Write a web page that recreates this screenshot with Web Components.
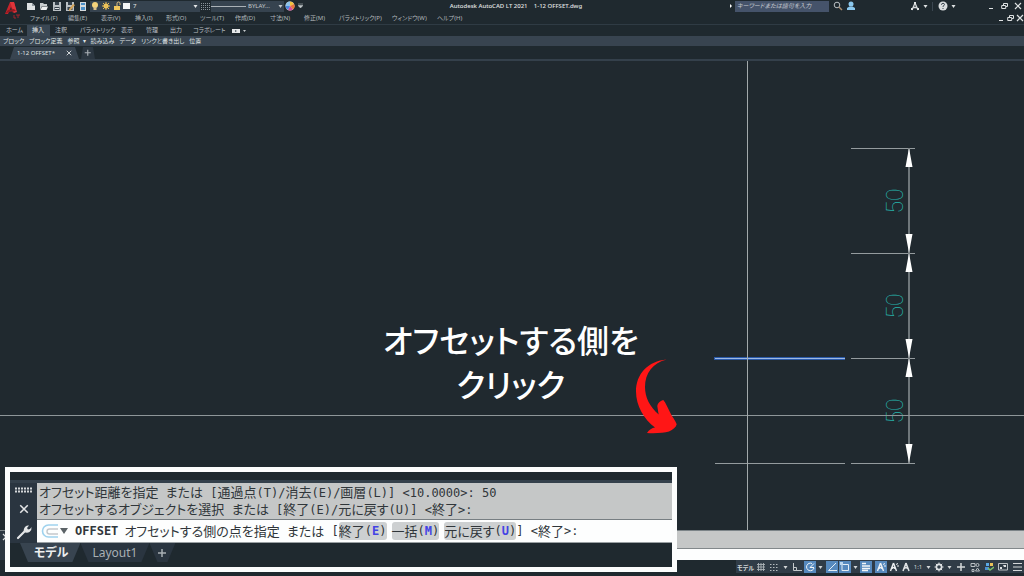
<!DOCTYPE html>
<html lang="ja">
<head>
<meta charset="utf-8">
<title>Autodesk AutoCAD LT 2021 - 1-12 OFFSET.dwg</title>
<style>
html,body{height:100%;margin:0}
body{background:#1f292f;font-family:"Noto Sans","Noto Sans CJK JP",sans-serif;color:#c3c8cb}
</style>
</head>
<body>
<cad-app></cad-app>
<script>
const base = `*{box-sizing:border-box}
button,select,input{font:inherit;color:inherit;font-feature-settings:inherit;background:none;border:0;padding:0;margin:0;min-width:0;appearance:none;outline:0}
button{display:flex;align-items:center;justify-content:center;white-space:nowrap}
a{color:inherit;text-decoration:none;white-space:nowrap}`;

function define(name, css, html) {
  customElements.define(name, class extends HTMLElement {
    constructor() {
      super();
      this.attachShadow({mode: 'open'}).innerHTML =
        `<style>${base}${css}</style>${typeof html === 'function' ? html(this) : html}`;
    }
  });
}

const icons = {
  logo: [16,18,'<path d="M1 12 6 0h4l2 8-3 3-2-6-3 7z" fill="#c5242b"/><path d="m6 0 4 0 3 10-3 1z" fill="#e0353a"/><path d="M1 12 4 8l6-1 2 2-7 1z" fill="#931a21"/><path d="M10 13v3h2M12 13h4M14 13v3" stroke="#a3242b" fill="none"/>'],
  fresh: [10,9,'<path d="M1 1h5l3 3v4H1z" fill="#dfe2e3"/><path d="m6 1 3 3H6z" fill="#8f989d"/>'],
  open: [10,9,'<path d="M1 8V1h3l1 1h3v2H3z" fill="#c9cdcf"/><path d="m3 4.500h6L7.500 8H1.500z" fill="#f0f1f1"/>'],
  save: [10,9,'<path d="M1 0h8v9H1z" fill="#b9bfc3"/><path d="M3 0h4v3H3zM2.500 5h5v3h-5z" fill="#35414b"/><path d="M3 6h4v1H3z" fill="#dfe2e3"/>'],
  saveas: [10,9,'<path d="M1 0h8v9H1z" fill="#b9bfc3"/><path d="M3 0h4v3H3zM2.500 5h5v3h-5z" fill="#35414b"/><path d="m4 7 4-5 2 1-4 5-2 1z" fill="#d3a45b"/>'],
  plot: [10,9,'<path d="M2 0h6v9H2z" fill="#d5dadd"/><path d="M3 1h4v2H3zM3 5h4v3H3z" fill="#4b8fc7"/>'],
  bulb: [8,10,'<circle cx="4" cy="4" r="3" fill="#f4d27a"/><path d="M2.500 6h3v3h-3z" fill="#d9c08a"/>'],
  sun: [10,10,'<circle cx="5" cy="5" r="2.500" fill="#f6cf68"/><path d="M5 1v8M1 5h8M2 2l6 6M8 2 2 8" stroke="#e8bd52"/>'],
  lock: [8,10,'<path d="M1 5h6v4H1z" fill="#f0c75c"/><path d="M4 5V2.500a1.500 1.500 0 0 1 3 0V4" fill="none" stroke="#e3c683"/>'],
  swatch: [8,8,'<path d="M0 1h7v6H0z" fill="#f5f6f6"/>'],
  hatch: [9,7,'<path d="M0 .5h9M0 2.500h9M0 4.500h9M0 6.500h9" stroke="#89939a" stroke-dasharray="1 1"/>'],
  wheel: [10,10,'<circle cx="5" cy="5" r="4.500" fill="#e8e3d5"/><path d="M5 5V.5A4.500 4.500 0 0 1 9 3z" fill="#f3c23c"/><path d="M5 5 9 3a4.500 4.500 0 0 1-1 5.500z" fill="#e8743b"/><path d="m5 5 3 3.500a4.500 4.500 0 0 1-5 .5z" fill="#d34a9a"/><path d="M5 5 3 9a4.500 4.500 0 0 1-2.500-4z" fill="#4a86e0"/><path d="M5 5H.5A4.500 4.500 0 0 1 5 .5z" fill="#8fc3e8"/>'],
  caret: [5,5,'<path d="M.5 1h4L2.500 4z" fill="currentColor"/>'],
  dropbar: [5,6,'<path d="M0 1h5M0 2.500h5L2.500 5z" fill="currentColor" stroke="currentColor" stroke-width=".5"/>'],
  play: [4,6,'<path d="M1 1v4l2-2z" fill="#fff"/>'],
  search: [10,10,'<circle cx="4" cy="4" r="2.800" fill="none" stroke="#b9bfc3"/><path d="m6 6 3 3" stroke="#a88c70" stroke-width="1.500"/>'],
  user: [10,10,'<circle cx="5" cy="3" r="2.500" fill="#8bc8ee"/><path d="M1 9V7l2.500-1.500h3L9 7v2z" fill="#8bc8ee"/>'],
  apps: [10,9,'<path d="m5 1 3 7M5 1 2 8M3 5.500h4" stroke="#d5d8da" stroke-width="1.300" fill="none"/><path d="M4 0h2v2H4zM1 6h2v2H1zM7 6h2v2H7z" fill="#e1e3e4"/>'],
  help: [10,10,'<circle cx="5" cy="5" r="4.500" fill="#dadddf"/><path d="M3.500 3.800q0-1.500 1.500-1.500t1.500 1.300q0 .7-1.500 1.700v.7M5 7v1" stroke="#38434c" fill="none"/>'],
  min: [8,8,'<path d="M1 6.500h4" stroke="currentColor"/>'],
  restore: [8,8,'<path d="M2.500 3V1.500h4v3H5M.7 3.500h4v3h-4z" stroke="currentColor" fill="none"/>'],
  close: [8,8,'<path d="m1 1 6 6M7 1 1 7" stroke="currentColor" stroke-width="1.200"/>'],
  plus: [10,10,'<path d="M5 1v8M1 5h8" stroke="currentColor" stroke-width="1.500"/>'],
  media: [14,6,'<path d="M0 1h8v4H0z" fill="#e5e7e8"/><path d="M3 2v2l2-1z" fill="#46525c"/><path d="M11 2h3l-1.500 2z" fill="#c3c8cb"/>'],
  grip: [19,6,'<path d="M1 1.500h18M1 4.500h18" stroke="#d4d7d9" stroke-width="2" stroke-dasharray="2 1"/>'],
  wrench: [16,16,'<path d="m2 14 7-7" stroke="#e4e6e7" stroke-width="2.200" stroke-linecap="round"/><path d="M8 8q-1-3 1.500-5.500Q11 1 13 1.500L11 4l1 1.500 2-.5 1.500-2Q16 6 13.500 8 11 9.500 8 8z" fill="#e4e6e7"/>'],
  offset: [18,14,'<path d="M17 1H7.500a6 6 0 0 0 0 12H17" fill="none" stroke="#9ed2ee" stroke-width="1.600"/><path d="M17 5H8.500a2.500 2.500 0 0 0 0 5H17" fill="none" stroke="#c3c8cc" stroke-width="1.400"/>'],
  grid: [10,10,'<path d="M2.500 1v8M5 1v8M7.500 1v8M1 2.500h8M1 5h8M1 7.500h8" stroke="#a9b1b6" stroke-width=".9"/>'],
  snap: [10,10,'<path d="M1 2.500h8M1 5.500h8M1 8.500h8" stroke="#b4bbbf" stroke-dasharray="1.500 1.500"/>'],
  ortho: [10,10,'<path d="M1.500 1v7.500H10M1.500 5.500h3v3" fill="none" stroke="#c3c8cb"/>'],
  polar: [10,10,'<path d="M7 1.500A3.800 3.800 0 1 0 9 6M9 5.500H5l4-4" fill="none" stroke="#f1f4f6"/>'],
  angle: [10,10,'<path d="M9 1 1.500 8.500H10" fill="none" stroke="#e4edf4"/>'],
  osnap: [10,10,'<path d="M2 2.500h6.500v6H2z" fill="none" stroke="#e4edf4"/><path d="M0 0h3v3H0z" fill="#b9d6ee"/>'],
  weight: [10,10,'<path d="M1 1.500h4M1 4h8M1 6.500h8M1 8.500h6" stroke="#f3f6f8" stroke-width="1.300"/>'],
  ann: [10,10,'<path d="M4.500 1 1.500 9M4.500 1l3 8M3 6.500q1.500-2 3 0" fill="none" stroke="#eef1f3" stroke-width="1.400"/><path d="m7 2.500 2-1M8 4h2" stroke="#eef1f3"/>'],
  person: [10,10,'<path d="M5 1 2 9M5 1l3 8M3.500 6.500q1.500-2 3 0" fill="none" stroke="#dde0e2" stroke-width="1.500"/>'],
  gear: [10,10,'<circle cx="5" cy="5" r="2.600" fill="none" stroke="#dde0e2" stroke-width="1.600"/><path d="M5 .5v2M5 7.500v2M.5 5h2M7.500 5h2M1.800 1.800l1.500 1.500M6.700 6.700l1.500 1.500M8.200 1.800 6.700 3.300M3.300 6.700 1.800 8.200" stroke="#dde0e2"/>'],
  shapes: [10,10,'<path d="M1 1.500h4v3H1zM2 7.500h2v2H2z" fill="none" stroke="#b9bfc3"/><circle cx="7.500" cy="3" r="1.500" fill="none" stroke="#b9bfc3"/><path d="m7.500 6 2 3h-4z" fill="none" stroke="#b9bfc3"/>'],
  perf: [10,10,'<path d="M2 1h3v3H2z" fill="#5aa9e6"/><path d="M6 1h3v3H6z" fill="#e9c35a"/><path d="M1 5h4v3H1z" fill="#4b8fd7"/><path d="m4 6 2 2 4-3" fill="none" stroke="#79c06b" stroke-width="1.500"/>'],
  clean: [10,10,'<path d="M.5 1.500h9v6.500h-9z" fill="none" stroke="#b9bfc3"/><path d="M5 3h3v2H6zM2 5h2v2H2z" fill="#dde0e2"/>'],
  menu: [10,10,'<path d="M1 1.500h9M1 5h9M1 8.500h9" stroke="#d3d7d9" stroke-width="1.200"/>']
};

define('cad-icon', ':host{display:block;flex:none;line-height:0}svg{display:block}', el => {
  const [w, h, body] = icons[el.getAttribute('name')];
  return `<svg width="${w}" height="${h}" viewBox="0 0 ${w} ${h}" aria-hidden="true">${body}</svg>`;
});
const icon = n => `<cad-icon name="${n}"></cad-icon>`;
const ib = (n, label, cls = '') => `<button class="${cls}" aria-label="${label}">${icon(n)}</button>`;

define('cad-titlebar', `
:host{display:grid;grid-template-columns:1fr auto 1fr;align-items:center;height:12px;padding-left:8px;font-size:6px;line-height:12px}
.left{display:flex;align-items:center;padding-left:16px}
.left>button{width:13px}
.left>.n{width:11px}
.layer{display:flex;align-items:center;gap:2px;width:110px;height:11px;margin-left:1px;padding:0 2px 0 1px;background:#36434f;color:#e5e7e8}
.layer select{flex:1}
.line{display:flex;align-items:center;width:73px;height:11px;padding-right:1px;background:#36434f;gap:2px}
.line i{width:35px;height:1px;background:#aab1b6}
.line select{flex:1}
h1{margin:0;font-size:6px;font-weight:500;color:#e1e4e5;white-space:pre}
.right{display:flex;align-items:center;justify-content:flex-end;color:#dfe2e3}
input{width:94px;height:11px;margin:0 2px 0 2px;padding:0 2px;background:#45536a;font-style:italic;font-feature-settings:"palt"}
input::placeholder{color:#c5cad0;opacity:1}
.right button{width:13px}
.right .apps{margin-left:51px}
.right .c{width:8px}
.bar{width:1px;height:9px;background:#3b4650;margin:0 3px}
.right .w{margin-left:28px}`,
`<div class="left">${ib('fresh','新規')}${ib('open','開く')}${ib('save','保存')}${ib('saveas','名前を付けて保存')}${ib('plot','印刷')}
<div class="layer">${icon('bulb')}${icon('sun')}${icon('lock')}${icon('swatch')}<select aria-label="画層"><option>7</option></select>${icon('caret')}</div>
${ib('hatch','線種','n')}
<div class="line"><i></i><select aria-label="線の太さ"><option>BYLAY...</option></select>${icon('caret')}</div>
${ib('wheel','色','n')}${ib('dropbar','クイックアクセス','n')}</div>
<h1>Autodesk AutoCAD LT 2021    1-12 OFFSET.dwg</h1>
<div class="right">${icon('play')}<input type="search" aria-label="検索" placeholder="キーワードまたは語句を入力">${ib('search','検索する')}${ib('user','サインイン')}${ib('apps','アプリ','apps')}${ib('caret','アプリのメニュー','c')}<span class="bar"></span>${ib('help','ヘルプ')}${ib('caret','ヘルプのメニュー','c')}${ib('min','最小化','w')}${ib('restore','元のサイズ')}${ib('close','閉じる')}</div>`);

define('cad-menubar', `
:host{display:flex;justify-content:space-between;height:12px;padding-left:30px;font-size:6px;line-height:12px;font-feature-settings:"palt";color:#b1b8bc}
nav{display:grid;grid-template-columns:38px 33px 34px 31px 34px 35px 35px 34px 35px 53px 45px auto}
div{display:flex;color:#dfe2e3}
button{width:9px}`,
`<nav>${['ファイル(F)','編集(E)','表示(V)','挿入(I)','形式(O)','ツール(T)','作成(D)','寸法(N)','修正(M)','パラメトリック(P)','ウィンドウ(W)','ヘルプ(H)'].map(t => `<a href="#">${t}</a>`).join('')}</nav>
<div>${ib('min','図面を最小化')}${ib('restore','図面を元のサイズに')}${ib('close','図面を閉じる')}</div>`);

define('cad-ribbon', `
:host{display:block;border-top:1px solid #2f3b44;font-size:6px;line-height:10px;font-feature-settings:"palt";color:#b9bfc3}
nav{display:grid;grid-template-columns:26px 23px 25px 41px 25px 24px 23px 44px auto;justify-content:start;height:11px;padding-left:1px}
nav a{padding-left:5px}
nav a.on{background:#3a4754;color:#e5e7e8}
.panels{display:flex;gap:5px;height:10px;padding-left:3px;background:#384450;color:#dfe2e3}`,
`<nav>${['ホーム','挿入','注釈','パラメトリック','表示','管理','出力','コラボレート'].map(t => `<a href="#"${t === '挿入' ? ' class="on"' : ''}>${t}</a>`).join('')}${ib('media','表示切り替え')}</nav>
<div class="panels">${['ブロック','ブロック定義','参照 &nbsp;▾','読み込み','データ','リンクと書き出し','位置'].map(t => `<button>${t}</button>`).join('')}</div>`);

define('cad-filetabs', `
:host{display:flex;align-items:flex-end;gap:2px;height:15px;padding-left:10px;border-bottom:2px solid #34404b;font-size:6px;line-height:12px}
div{display:flex;align-items:center;gap:11px;height:12px;padding:0 7px;background:#384450;clip-path:polygon(0 100%,4px 0,calc(100% - 4px) 0,100% 100%);color:#dfe2e3}
.add{width:14px;height:12px;background:#2c3741;clip-path:polygon(0 100%,2px 0,12px 0,100% 100%);color:#aab1b6}
div cad-icon,.add cad-icon{zoom:.75}`,
`<div><a href="#">1-12 OFFSET*</a>${ib('close','タブを閉じる')}</div>${ib('plus','新しい図面','add')}`);

const dim = y => `<path d="M909 ${y}v105" stroke="#6f777b" stroke-width="2"/><path d="m909 ${y} 3.500 19h-7zM909 ${y + 105}l3.500-19h-7z" fill="#fff"/><text transform="translate(903 ${y + 53}) rotate(-90)">50</text>`;
define('cad-canvas', `
:host{display:block;position:relative;min-height:0;overflow:hidden;background:#20292f}
svg{position:absolute;inset:0;width:100%;height:100%}
text{font:100 23px Roboto,sans-serif;fill:#27b5ac;text-anchor:middle}
p{position:absolute;left:383px;top:256px;margin:0;color:#fff;font:500 32px/44px "Noto Sans CJK JP",sans-serif;font-feature-settings:"palt";text-align:center;white-space:nowrap}`,
`<svg><g transform="translate(0 -61)">
<path d="M851 148.500h64M851 253.500h64M851 358.500h64M851 463.500h64M715 463.500h130" stroke="#949b9e"/>
${dim(148)}${dim(253)}${dim(358)}
<path d="M714 358.500h131" stroke="#2a59a8" stroke-width="3"/><path d="M715 358.500h130" stroke="#9db8e2"/>
</g>
<line x1="0" y1="354.500" x2="100%" y2="354.500" stroke="#8e9699"/><line x1="747.500" y1="0" x2="747.500" y2="100%" stroke="#a2a9ab"/>
<path transform="translate(0 -61)" fill="#ff1616" d="M666.700 359.500C648 361 636 374 636 391.500c0 14 8 28 19 36-3 .5-6 2-8 5.500 8 .5 17 0 22-1.500 4-2 7-4 7.700-7.200-1-3.500-5-8-7.200-13-2-4-3.500-8-6.200-11.300-4 1.500-6.500 4-5.800 7.500.5 3 .8 5 1.200 7-9-8-13.700-17-13.700-27.500 0-14 8-24 21.700-27.500z"/>
</svg><p>オフセットする側を<br>クリック</p>`);

define('cad-commandbar', `
:host{display:grid;grid-template-columns:10px 1fr;height:30px;background:#2c3741;border-top:1px solid #7c8488;color:#dfe2e3}
.hist{height:18px;background:#c5c7c7;border-bottom:1px solid #82888b}
input{display:block;width:100%;height:11px;background:#fdfefe}
.side{padding:2px}`,
`<div class="side">${icon('close')}</div><div><div class="hist"></div><input aria-label="コマンド"></div>`);

define('cad-statusbar', `
:host{display:flex;justify-content:flex-end;align-items:flex-start;height:16px;font-size:6px;font-feature-settings:"palt";color:#d3d7d9}
div{display:flex;height:13px;padding-top:1px;background:#303c47}
button{height:12px;width:14px}
.s{width:12px}.c{width:9px}.l{width:19px;font-weight:600}
.on{width:12px;background:#5689bd}
.g{margin-left:1px}.h{margin-left:3px}`,
`<div><button class="l">モデル</button>${ib('grid','グリッド','s')}${ib('snap','スナップ')}${ib('caret','スナップ設定','c')}${ib('ortho','直交モード')}${ib('polar','極トラッキング','on')}${ib('caret','極トラッキング設定','c')}${ib('angle','オブジェクトスナップトラッキング','on g')}${ib('osnap','オブジェクトスナップ','on g')}${ib('caret','スナップの種類','c')}${ib('weight','線の太さ','on')}${ib('ann','注釈オブジェクト','on h')}${ib('ann','自動尺度','s g')}${ib('person','注釈尺度','s')}<button class="s">1:1</button>${ib('caret','尺度一覧','c')}${ib('gear','ワークスペース','s')}${ib('caret','ワークスペース一覧','c')}${ib('plus','注釈モニター')}${ib('shapes','選択表示')}${ib('perf','パフォーマンス')}${ib('clean','全画面表示')}${ib('menu','カスタマイズ')}</div>`);

define('cad-zoombox', `
:host{display:grid;grid-template-rows:11px auto 23px 1fr;grid-template-columns:27px 1fr;width:672px;height:105px;border:5px solid #fcfdfd;background:#1f292f;font:13px/16px "Noto Sans CJK JP",sans-serif;font-feature-settings:"palt";color:#30363a;overflow:hidden}
.top{grid-column:1/-1;border-bottom:3px solid #34404b}
.side{grid-row:2/4;display:flex;flex-direction:column;align-items:center;justify-content:space-between;padding:4px 0 3px;background:#2a3540;color:#e4e6e7}
.side button:nth-of-type(1) cad-icon{zoom:1.25}
.hist{height:37px;padding:1px 2px;background:#c5c7c7;border-bottom:1px solid #777e82}
.hist div{white-space:pre}
tt{font:12px/16px "DejaVu Sans Mono",monospace;white-space:pre}
.cmd{display:flex;align-items:center;height:23px;padding-left:4px;background:#fdfefe;border-bottom:1px solid #9aa0a3;white-space:pre}
.cmd b{font:bold 12px/16px "DejaVu Sans Mono",monospace;margin:0 6px 0 6px}
.cmd .chip{height:18px;background:#cdd0d1;border-radius:3px;margin-right:5px}
.cmd .chip.last{margin-right:0}
.chip em{font-style:normal;font-weight:700;color:#4343e4}
.cmd button:first-of-type{color:#5a6266}
.cmd button:first-of-type cad-icon{zoom:2}
.cmd input{flex:1}
.tabs{grid-column:1/-1;display:flex;align-items:flex-start;padding-left:10px;font-family:"Noto Sans","Noto Sans CJK JP",sans-serif;font-size:12px;color:#a9b0b4}
.tabs button{height:19px;padding:0 12px;background:#2a3540;clip-path:polygon(0 0,100% 0,calc(100% - 8px) 100%,8px 100%)}
.tabs .on{padding-left:14px;background:#384450;color:#eceeef;font-weight:600}
.tabs .add{padding:0 8px}`,
`<div class="top"></div>
<div class="side">${icon('grip')}${ib('close','コマンドラインを閉じる')}${ib('wrench','カスタマイズ')}</div>
<div class="hist"><div>オフセット距離を指定<tt> </tt>または<tt> [</tt>通過点<tt>(T)/</tt>消去<tt>(E)/</tt>画層<tt>(L)] &lt;10.0000&gt;: 50</tt></div><div>オフセットするオブジェクトを選択<tt> </tt>または<tt> [</tt>終了<tt>(E)/</tt>元に戻す<tt>(U)] &lt;</tt>終了<tt>&gt;:</tt></div></div>
<div class="cmd">${icon('offset')}${ib('caret','最近使用したコマンド')}<b>OFFSET</b>オフセットする側の点を指定<tt> </tt>または<tt> [</tt><button class="chip">終了<tt>(<em>E</em>)</tt></button><button class="chip">一括<tt>(<em>M</em>)</tt></button><button class="chip last">元に戻す<tt>(<em>U</em>)</tt></button><tt>] &lt;</tt>終了<tt>&gt;:</tt><input aria-label="コマンド入力"></div>
<div class="tabs"><button class="on">モデル</button><button>Layout1</button>${ib('plus','レイアウトを追加','add')}</div>`);

define('cad-app', `
:host{display:grid;position:relative;grid-template-rows:auto auto auto auto 1fr auto auto;height:100vh;min-height:400px;overflow:hidden}
.logo{position:absolute;left:4px;top:2px}
cad-zoombox{position:absolute;left:5px;bottom:4px}`,
`<cad-titlebar></cad-titlebar><cad-menubar></cad-menubar><cad-ribbon></cad-ribbon><cad-filetabs></cad-filetabs><cad-canvas></cad-canvas><cad-commandbar></cad-commandbar><cad-statusbar></cad-statusbar>
<cad-icon class="logo" name="logo"></cad-icon><cad-zoombox></cad-zoombox>`);
</script>
</body>
</html>
